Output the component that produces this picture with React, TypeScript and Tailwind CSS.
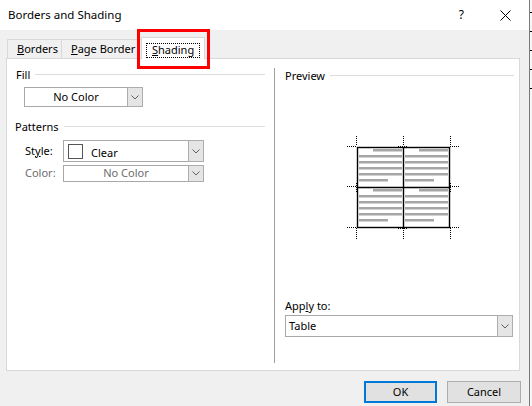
import React from "react";

function Chevron() {
  return (
    <svg width="8" height="5" viewBox="0 0 8 5">
      <polyline points="0.5,0.5 4,4 7.5,0.5" fill="none" stroke="#606060" strokeWidth="1" />
    </svg>
  );
}

function Combo({
  width,
  height,
  children,
  className = "",
}: {
  width: string;
  height: string;
  children: React.ReactNode;
  className?: string;
}) {
  return (
    <div className={`flex border border-[#a8a8a8] bg-white ${width} ${height} ${className}`}>
      <div className="flex-1 flex items-center min-w-0">{children}</div>
      <div className="w-[16px] -my-px -mr-px flex items-center justify-center border border-[#adadad] bg-[#e5e5e5]">
        <Chevron />
      </div>
    </div>
  );
}

function GroupTitle({ label, pl, mr }: { label: string; pl: string; mr: string }) {
  return (
    <div className={`flex items-center h-[16px] ${pl} ${mr}`}>
      <span className="leading-none">{label}</span>
      <div className="flex-1 h-px bg-[#dcdcdc] ml-[5px]" />
    </div>
  );
}

function TablePreview() {
  // page offset: x-343, y-132
  const rows = [
    [149, 155, 161, 167, 173, 179],
    [189, 195, 201, 207, 213, 219],
  ];
  const cols = [
    { l: 359, r: 402, short: 373, last: 388 },
    { l: 405, r: 448, short: 419, last: 434 },
  ];
  const bars: React.ReactNode[] = [];
  rows.forEach((ys, ri) =>
    cols.forEach((c, ci) =>
      ys.forEach((y, i) => {
        let x1 = c.l;
        let x2 = c.r;
        if (i === 0) x1 = c.short;
        if (i === ys.length - 1) x2 = c.last;
        bars.push(
          <rect key={`${ri}-${ci}-${i}`} x={x1 - 343} y={y - 132} width={x2 - x1} height="2.5" fill="#a6a6a6" />
        );
      })
    )
  );
  const dot = { stroke: "#000", strokeWidth: 1, strokeDasharray: "1 1", fill: "none" };
  const ticks: [number, number, number, number][] = [
    // verticals above / below
    [356.5, 136, 356.5, 146],
    [403.5, 136, 403.5, 146],
    [450.5, 136, 450.5, 146],
    [356.5, 228, 356.5, 239],
    [403.5, 228, 403.5, 239],
    [450.5, 228, 450.5, 239],
    // horizontals left / right
    [347, 146.5, 357, 146.5],
    [450, 146.5, 460, 146.5],
    [347, 186.5, 357, 186.5],
    [450, 186.5, 460, 186.5],
    [347, 227.5, 357, 227.5],
    [450, 227.5, 460, 227.5],
    // short marks at middle
    [398, 146.5, 408, 146.5],
    [398, 228.5, 408, 228.5],
    [356.5, 183, 356.5, 192],
    [450.5, 183, 450.5, 192],
  ];
  return (
    <svg width="120" height="110" viewBox="0 0 120 110">
      {ticks.map(([x1, y1, x2, y2], i) => (
        <line key={i} x1={x1 - 343} y1={y1 - 132} x2={x2 - 343} y2={y2 - 132} {...dot} />
      ))}
      <rect x={357.5 - 343} y={147.5 - 132} width="92" height="80" fill="#fff" stroke="#000" strokeWidth="1.4" />
      {bars}
      <line x1={403.5 - 343} y1={147.5 - 132} x2={403.5 - 343} y2={227.5 - 132} stroke="#000" strokeWidth="1.4" />
      <line x1={357.5 - 343} y1={187.5 - 132} x2={449.5 - 343} y2={187.5 - 132} stroke="#000" strokeWidth="1.4" />
    </svg>
  );
}

export default function App() {
  return (
    <div className="relative w-[532px] h-[406px] flex bg-white text-[11px] text-black font-['Segoe_UI','Noto_Sans',sans-serif] overflow-hidden">
      {/* Dialog */}
      <div className="w-[529px] flex flex-col bg-[#f0f0f0]">
        {/* Title bar */}
        <div className="h-[30px] bg-white flex items-center pl-[8px] pr-[18px]">
          <span className="text-[11.5px] leading-none">Borders and Shading</span>
          <span className="ml-auto text-[12px] leading-none">?</span>
          <svg className="ml-[36px]" width="11" height="11" viewBox="0 0 11 11">
            <path d="M0.5 0.5 L10.5 10.5 M10.5 0.5 L0.5 10.5" stroke="#000" strokeWidth="1" />
          </svg>
        </div>

        {/* Tabs */}
        <div className="flex items-end h-[28px] pl-[7px]">
          <div className="h-[19px] w-[55px] flex items-center pl-[9px] border border-b-0 border-[#d9d9d9]">
            <span><u>B</u>orders</span>
          </div>
          <div className="h-[19px] w-[80px] flex items-center pl-[9px] border border-l-0 border-b-0 border-[#d9d9d9]">
            <span><u>P</u>age Border</span>
          </div>
          <div className="relative z-10 -mb-px -ml-px h-[22px] w-[64px] pt-[4px] pl-[4px] bg-white border border-b-0 border-[#d9d9d9]">
            <span className="inline-flex items-center h-[15px] px-[5px] border border-dotted border-black">
              <span><u>S</u>hading</span>
            </span>
          </div>
        </div>

        {/* Panel */}
        <div className="ml-[6px] w-[514px] h-[313px] border border-[#d9d9d9] bg-white flex">
          {/* Left column */}
          <div className="w-[267px] flex flex-col">
            <GroupTitle label="Fill" pl="pl-[9px] mt-[7px]" mr="mr-[9px]" />
            <Combo width="w-[119px]" height="h-[20px]" className="ml-[17px] mt-[5px]">
              <span className="w-full text-center">No Color</span>
            </Combo>
            <div className="mt-[11px]">
              <GroupTitle label="Patterns" pl="pl-[8px]" mr="mr-[9px]" />
            </div>
            <div className="flex items-center mt-[6px] pl-[18px]">
              <span className="w-[38px]">
                St<u>y</u>le:
              </span>
              <Combo width="w-[141px]" height="h-[22px]">
                <div className="ml-[4px] w-[15px] h-[15px] border border-[#555] bg-white" />
                <span className="ml-[8px] mt-[4px]">Clear</span>
              </Combo>
            </div>
            <div className="flex items-center mt-[3px] pl-[18px] text-[#6d6d6d]">
              <span className="w-[38px]">Color:</span>
              <Combo width="w-[141px]" height="h-[17px]">
                <span className="w-full text-center">No Color</span>
              </Combo>
            </div>
          </div>

          {/* Separator */}
          <div className="self-start mt-[9px] h-[295px] w-px bg-[#a0a0a0]" />

          {/* Right column */}
          <div className="flex-1 flex flex-col">
            <div className="mt-[8px]">
              <GroupTitle label="Preview" pl="pl-[10px]" mr="mr-[5px]" />
            </div>
            <div className="mt-[49px] ml-[68px]">
              <TablePreview />
            </div>
            <div className="mt-[56px] h-[16px] pl-[10px] flex items-center">
              <span>
                App<u>l</u>y to:
              </span>
            </div>
            <Combo width="w-[228px]" height="h-[22px]" className="ml-[10px] mt-px">
              <span className="ml-[3px]">Table</span>
            </Combo>
          </div>
        </div>

        {/* Buttons */}
        <div className="flex justify-end gap-[10px] mt-[10px] pr-[8px]">
          <button className="w-[73px] h-[22px] border-2 border-[#0078d7] bg-[#e1e1e1] flex items-center justify-center">
            OK
          </button>
          <button className="w-[74px] h-[22px] border border-[#adadad] bg-[#e1e1e1] flex items-center justify-center">
            Cancel
          </button>
        </div>
      </div>

      {/* Background document ruler edge */}
      <div className="w-[3px] border-l border-[#7a7a7a] bg-[#f7f7f7] flex flex-col pt-[12px] gap-[18px]">
        <div className="h-px bg-black" />
        <div className="h-px bg-black" />
        <div className="h-px bg-black" />
        <div className="h-px bg-black" />
        <div className="h-px bg-black" />
      </div>

      {/* Red highlight annotation */}
      <div className="absolute left-[137px] top-[29px] w-[73px] h-[40px] border-[3px] border-[#ff0000]" />
    </div>
  );
}
